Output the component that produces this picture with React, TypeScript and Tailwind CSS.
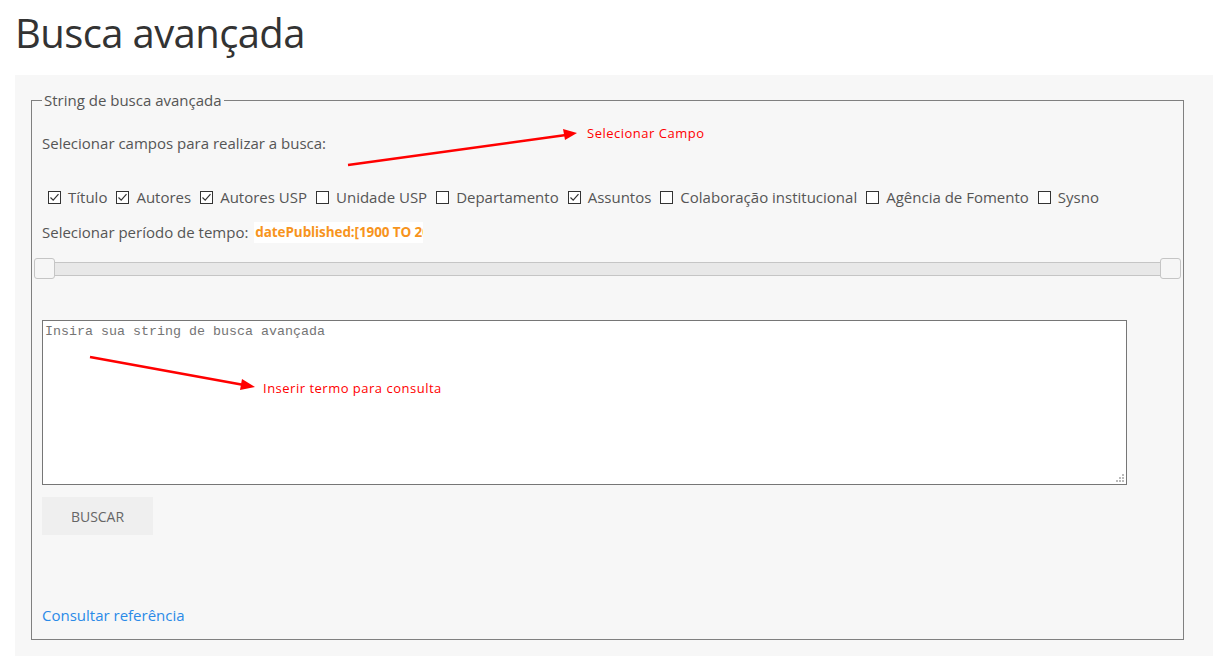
import React from "react";

const fields = [
  { label: "Título", checked: true },
  { label: "Autores", checked: true },
  { label: "Autores USP", checked: true },
  { label: "Unidade USP", checked: false },
  { label: "Departamento", checked: false },
  { label: "Assuntos", checked: true },
  { label: "Colaboração institucional", checked: false },
  { label: "Agência de Fomento", checked: false },
  { label: "Sysno", checked: false },
];

function Box({ checked }: { checked: boolean }) {
  return (
    <span className="flex h-[13px] w-[13px] shrink-0 items-center justify-center border border-[#333] bg-white">
      {checked && (
        <svg width="11" height="11" viewBox="0 0 11 11" fill="none">
          <path d="M1.5 5.5 L4.2 8.2 L9.5 2.2" stroke="#333" strokeWidth="1.2" />
        </svg>
      )}
    </span>
  );
}

export default function App() {
  return (
    <div className="relative min-h-[656px] bg-white font-['Open_Sans',sans-serif] text-[#555]">
      <h1 className="px-[15px] pt-[4px] pb-[13px] text-[40px] leading-[58px] tracking-[-0.6px] text-[#333]">
        Busca avançada
      </h1>

      <div className="ml-[15px] bg-[#f7f7f7] pt-[15px] pr-[29px] pb-[17px] pl-[16px]">
        <fieldset className="border border-[#808080] px-[10px] pb-[12px]">
          <legend className="px-[2px] text-[15px] leading-[20px]">
            String de busca avançada
          </legend>

          <p className="mt-[22px] text-[15px] leading-[22px]">
            Selecionar campos para realizar a busca:
          </p>

          <div className="mt-[32px] flex items-center gap-[9px] pl-[6px] text-[15px] leading-[22px]">
            {fields.map((f) => (
              <label key={f.label} className="flex items-center gap-[7px]">
                <Box checked={f.checked} />
                <span>{f.label}</span>
              </label>
            ))}
          </div>

          <div className="mt-[13px] flex items-center gap-[6px] text-[15px] leading-[22px]">
            <span>Selecionar período de tempo:</span>
            <input
              readOnly
              value="datePublished:[1900 TO 2025]"
              className="h-[21px] w-[169px] bg-white pl-[1px] text-[13.5px] font-bold tracking-[-0.1px] text-[#f7941d] outline-none"
            />
          </div>

          <div className="relative mx-[-8px] mt-[19px] h-[14px] border border-[#c5c5c5] bg-[#e8e8e8]">
            <span className="absolute top-[-5px] left-[-1px] h-[21px] w-[21px] rounded-[3px] border border-[#c5c5c5] bg-[#f6f6f6]" />
            <span className="absolute top-[-5px] right-[-1px] h-[21px] w-[21px] rounded-[3px] border border-[#c5c5c5] bg-[#f6f6f6]" />
          </div>

          <div className="relative mt-[44px] w-[1085px]">
            <textarea
              placeholder="Insira sua string de busca avançada"
              className="block h-[165px] w-full resize-none border border-[#767676] bg-white px-[2px] pt-[3px] font-['Liberation_Mono',monospace] text-[13.33px] leading-[16px] text-[#333] placeholder:text-[#757575] outline-none"
            />
            <svg className="absolute right-[3px] bottom-[3px]" width="8" height="8" viewBox="0 0 8 8">
              <rect x="6" y="0" width="2" height="2" fill="#bbb" />
              <rect x="3" y="3" width="2" height="2" fill="#bbb" />
              <rect x="6" y="3" width="2" height="2" fill="#bbb" />
              <rect x="0" y="6" width="2" height="2" fill="#bbb" />
              <rect x="3" y="6" width="2" height="2" fill="#bbb" />
              <rect x="6" y="6" width="2" height="2" fill="#bbb" />
            </svg>
          </div>

          <button className="mt-[12px] h-[38px] w-[111px] bg-[#efefef] text-[14px] text-[#666]">
            BUSCAR
          </button>

          <div className="mt-[68px]">
            <a href="#" className="text-[15px] leading-[22px] text-[#2a8ae8]">
              Consultar referência
            </a>
          </div>
        </fieldset>
      </div>

      <svg className="pointer-events-none absolute top-0 left-0" width="1213" height="656">
        <line x1="348" y1="165" x2="566" y2="135" stroke="#ff0000" strokeWidth="2.5" />
        <polygon points="577,133 563,129 565,140" fill="#ff0000" />
        <line x1="90" y1="357" x2="244" y2="385" stroke="#ff0000" strokeWidth="2.5" />
        <polygon points="255,387 242,379 240,390" fill="#ff0000" />
      </svg>
      <span className="absolute top-[124px] left-[587px] text-[13px] leading-[18px] tracking-[0.5px] text-[#ff0000]">
        Selecionar Campo
      </span>
      <span className="absolute top-[379px] left-[263px] text-[13px] leading-[18px] tracking-[0.5px] text-[#ff0000]">
        Inserir termo para consulta
      </span>
    </div>
  );
}
